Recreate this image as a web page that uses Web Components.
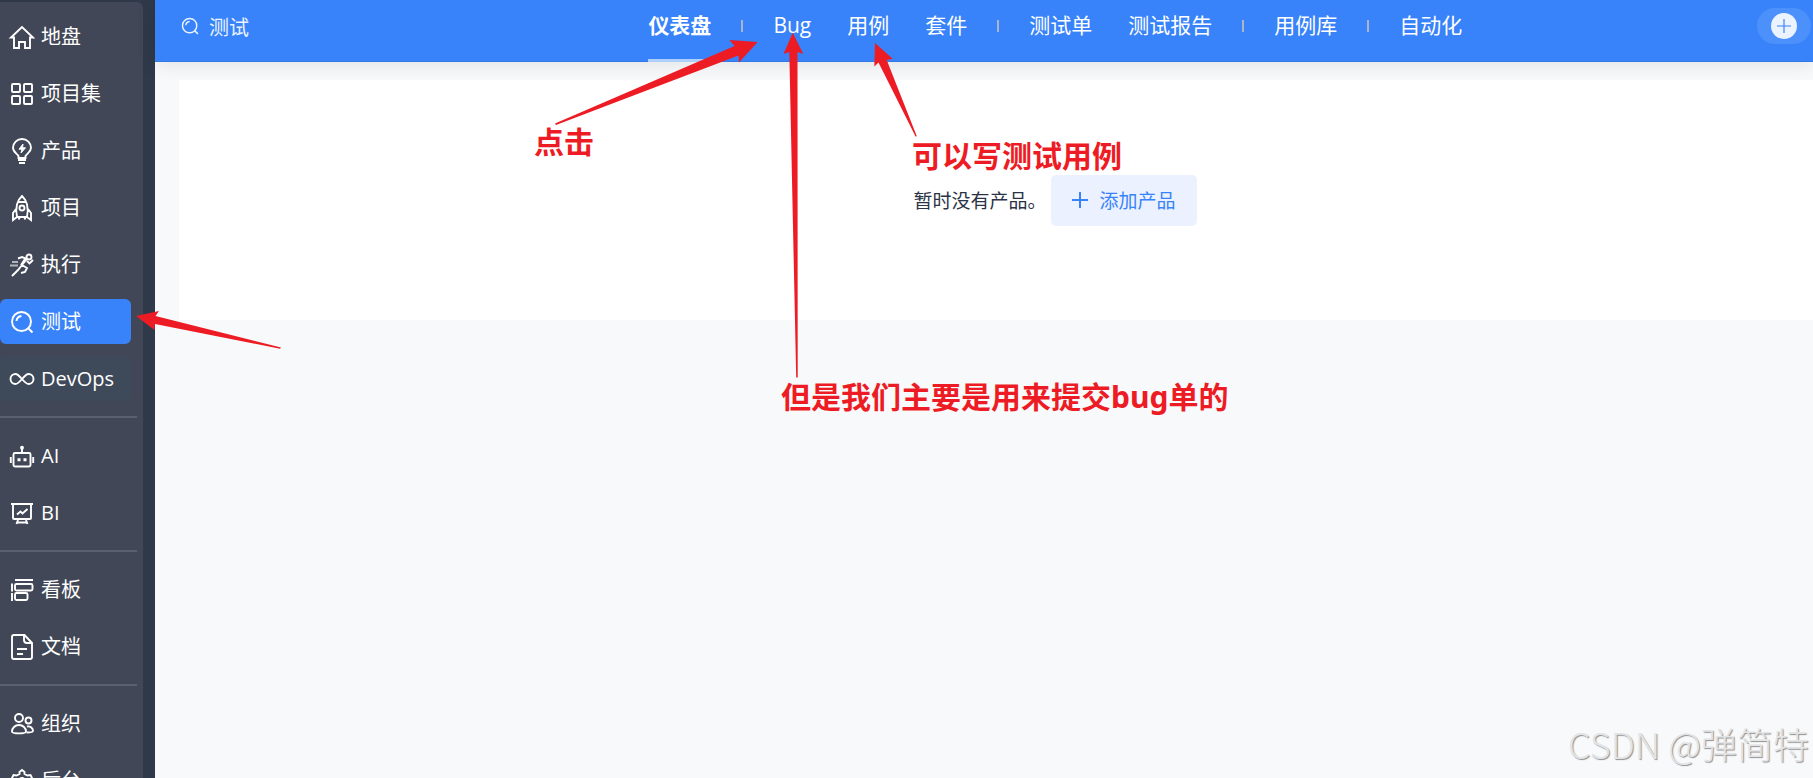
<!DOCTYPE html>
<html lang="zh-CN">
<head>
<meta charset="UTF-8">
<meta name="viewport" content="width=device-width, initial-scale=1">
<title>测试 - 仪表盘</title>
<style>
  body {
    margin: 0;
    background: #f8f9fb;
    font-family: "Open Sans", "Noto Sans CJK SC", sans-serif;
    overflow: hidden;
  }
</style>
</head>
<body>
<app-shell>
  <side-menu slot="menu">
    <side-item icon="home">地盘</side-item>
    <side-item icon="grid">项目集</side-item>
    <side-item icon="bulb">产品</side-item>
    <side-item icon="rocket">项目</side-item>
    <side-item icon="run">执行</side-item>
    <side-item icon="search" class="active">测试</side-item>
    <side-item icon="infinity" class="hover">DevOps</side-item>
    <side-divider></side-divider>
    <side-item icon="robot">AI</side-item>
    <side-item icon="board">BI</side-item>
    <side-divider></side-divider>
    <side-item icon="kanban">看板</side-item>
    <side-item icon="doc">文档</side-item>
    <side-divider></side-divider>
    <side-item icon="people">组织</side-item>
    <side-item icon="gear">后台</side-item>
  </side-menu>
  <top-bar slot="top" heading="测试">
    <nav-link class="active">仪表盘</nav-link>
    <nav-divider></nav-divider>
    <nav-link>Bug</nav-link>
    <nav-link>用例</nav-link>
    <nav-link>套件</nav-link>
    <nav-divider></nav-divider>
    <nav-link>测试单</nav-link>
    <nav-link>测试报告</nav-link>
    <nav-divider></nav-divider>
    <nav-link>用例库</nav-link>
    <nav-divider></nav-divider>
    <nav-link>自动化</nav-link>
  </top-bar>
  <empty-panel action="添加产品">暂时没有产品。</empty-panel>
</app-shell>
<mark-layer>
  <mark-note x="534" y="120">点击</mark-note>
  <mark-note x="912" y="134">可以写测试用例</mark-note>
  <mark-note x="781" y="375">但是我们主要是用来提交bug单的</mark-note>
</mark-layer>
<water-mark>CSDN @弹简特</water-mark>

<script>
const icons = {
  home: `<path d="M1 12.500 12 2l11 10.500h-3V23h-5v-6H9v6H4V12.500z"/>`,
  grid: `<rect x="2" y="2" width="8" height="8" rx="1"/><rect x="14" y="2" width="8" height="8" rx="1"/><rect x="2" y="14" width="8" height="8" rx="1"/><rect x="14" y="14" width="8" height="8" rx="1"/>`,
  bulb: `<path d="M8.500 19v-2C7 14.500 3 13 3 8.800a9 8.800 0 0 1 18 0c0 4.200-4 5.700-5.500 8.200v2zM8 21h8M9 24h6"/><path d="M13 5 9 10.200h3L11 14l4.500-5.200h-3z" fill="currentColor" stroke-width="1"/>`,
  rocket: `<path d="M7 21C5 11 7 4.500 12 0c5 4.500 7 11 5 21zM8 6h8M6 13l-3 4v7l4-3M18 13l3 4v7l-4-3M10 21l-1.500 2.500M14 21l1.500 2.500"/><circle cx="12" cy="12" r="2.500"/>`,
  run: `<circle cx="19" cy="4" r="2.500"/><path d="M8 5.500 12 4l5 2-5 6 5 3-2 4-4 1M12 12l-4 5-6 6M17 8l2.500 2.500L23 7M15 6l-4 6"/><path d="M2 9h6M0 12.500h8" opacity=".6"/>`,
  search: `<circle cx="11.500" cy="11.500" r="9.500"/><path d="m18.500 18.500 4 4M6.500 11a5.500 5.500 0 0 1 5-5"/>`,
  infinity: `<path d="M12 12c-3-3.500-4.500-5-6.500-5a5 5 0 0 0 0 10c2 0 3.500-1.500 6.500-5s4.500-5 6.500-5a5 5 0 0 1 0 10c-2 0-3.500-1.500-6.500-5z"/>`,
  robot: `<rect x="3.500" y="9" width="17" height="13.500" rx="1.500"/><path d="M12 9V4M.800 13v6M23.200 13v6"/><circle cx="12" cy="3.800" r="1" fill="currentColor"/><path d="M7.500 15.800h3M13.500 15.800h3" stroke-width="3"/>`,
  board: `<path d="M1 3h22M3 3v14q0 1 1 1h16q1 0 1-1V3M8 19l-1.500 4M16 19l1.500 4M7 21.500h10M7 13.500l3.500-3 2 2L17.500 8"/>`,
  kanban: `<path d="M5 2h18M2 5.500v8M2 15v8"/><rect x="5" y="6" width="17.500" height="6.500" rx="1.500"/><rect x="5" y="15" width="12.500" height="7" rx="1.500"/>`,
  doc: `<path d="M14.500 0H4Q2 0 2 2v20q0 2 2 2h16q2 0 2-2V8zM14 .500V5q0 3 3 3h5M7 14h10M7 19h6"/>`,
  people: `<circle cx="9" cy="6" r="4"/><path d="M9 13c-4 0-7 3-7 6.500 0 2.500 14 2.500 14 0C16 16 13 13 9 13z"/><circle cx="18.500" cy="8.500" r="3"/><path d="M17 14.500c3.500-.5 6 1.500 6 4.500 0 1.300-3 1.500-6.500 1.500"/>`,
  gear: `<path d="m9.500 3 2.500-2 2.500 2v2l3 1.500L20.500 6 22 9l-1.500 2.500v3L22 17l-2 3.500-3-.5-2.500 2L12 24l-2.500-2L7 20l-3 .500L2 17l1.500-2.500v-3L2 9l1.500-3 3 .500 3-1.500z"/><circle cx="12" cy="12.500" r="3.500"/>`,
  plus: `<path d="M12 0v24M0 12h24"/>`
};

class UiIcon extends HTMLElement {
  connectedCallback() {
    this.attachShadow({ mode: "open" });
    this.shadowRoot.innerHTML = `
    <style>
      :host { display: block; flex: none; width: var(--icon-size, 24px); height: var(--icon-size, 24px); }
      svg { display: block; width: 100%; height: 100%; overflow: visible; }
    </style>
    <svg viewBox="0 0 24 24" fill="none" stroke="currentColor" stroke-width="${this.getAttribute("weight") || 1.9}" aria-hidden="true">${icons[this.getAttribute("name")]}</svg>
    `;
  }
}

class AppShell extends HTMLElement {
  connectedCallback() {
    this.attachShadow({ mode: "open" });
    this.shadowRoot.innerHTML = `
    <style>
      :host { display: flex; height: 100vh; overflow: hidden; }
      .page { flex: 1; min-width: 0; }
      main { padding: 18px 0 0 24px; }
    </style>
    <slot name="menu"></slot>
    <div class="page">
      <slot name="top"></slot>
      <main><slot></slot></main>
    </div>
    `;
  }
}

class SideMenu extends HTMLElement {
  connectedCallback() {
    this.attachShadow({ mode: "open" });
    this.shadowRoot.innerHTML = `
    <style>
      :host {
        display: block;
        box-sizing: border-box;
        flex: none;
        width: 155px;
        padding: 2px 12px 0 0;
        background: #2f394a;
      }
      nav {
        display: flex;
        flex-direction: column;
        gap: 12px;
        box-sizing: border-box;
        min-height: 100%;
        padding: 12px 0;
        border-radius: 0 6px 0 0;
        background: #414756;
      }
    </style>
    <nav><slot></slot></nav>
    `;
  }
}

class SideItem extends HTMLElement {
  connectedCallback() {
    this.attachShadow({ mode: "open" });
    this.shadowRoot.innerHTML = `
    <style>
      :host { display: block; margin-right: 12px; }
      a {
        display: flex;
        align-items: center;
        gap: 7px;
        height: 45px;
        padding-left: 10px;
        border-radius: 6px;
        color: #fff;
        font-size: 20px;
        line-height: 45px;
        text-decoration: none;
        white-space: nowrap;
      }
      :host(.active) a { background: #3883fa; }
      :host(.hover) a { background: #3e495a; }
    </style>
    <a href="#"><ui-icon name="${this.getAttribute("icon")}"></ui-icon><span><slot></slot></span></a>
    `;
  }
}

class SideDivider extends HTMLElement {
  connectedCallback() {
    this.attachShadow({ mode: "open" });
    this.shadowRoot.innerHTML = `
    <style>
      :host { display: block; height: 2px; margin: 3px 6px 3px 0; background: #5a606e; }
    </style>
    `;
  }
}

class TopBar extends HTMLElement {
  connectedCallback() {
    this.attachShadow({ mode: "open" });
    this.shadowRoot.innerHTML = `
    <style>
      :host { display: block; }
      header {
        display: grid;
        grid-template-columns: 10fr auto 7fr;
        height: 62px;
        background: #3883fa;
        box-shadow: inset 0 -1px #3579e6, 0 2px 20px rgba(0, 0, 0, .1);
        color: #fff;
      }
      .heading, .tools {
        display: flex;
        align-items: center;
        height: 52px;
      }
      .heading {
        --icon-size: 18px;
        gap: 10px;
        padding-left: 26px;
        color: #ebf3ff;
        font-size: 20px;
      }
      nav { display: flex; }
      .tools { justify-content: flex-end; padding-right: 2px; }
      button {
        --icon-size: 14px;
        display: grid;
        place-items: center;
        width: 54px;
        height: 36px;
        padding: 0;
        border: 0;
        border-radius: 18px;
        background: #4c90fb;
        color: #3883fa;
      }
      .dot {
        display: grid;
        place-items: center;
        width: 26px;
        height: 26px;
        border-radius: 50%;
        background: #ebf3ff;
      }
    </style>
    <header>
      <div class="heading"><ui-icon name="search"></ui-icon><span>${this.getAttribute("heading")}</span></div>
      <nav><slot></slot></nav>
      <div class="tools">
        <button type="button" aria-label="+"><span class="dot"><ui-icon name="plus" weight="2"></ui-icon></span></button>
      </div>
    </header>
    `;
  }
}

class NavLink extends HTMLElement {
  connectedCallback() {
    this.attachShadow({ mode: "open" });
    this.shadowRoot.innerHTML = `
    <style>
      :host { display: block; padding: 0 18px; }
      a {
        display: block;
        box-sizing: border-box;
        height: 62px;
        border-bottom: 3px solid transparent;
        color: #fff;
        font-size: 21px;
        line-height: 50px;
        text-decoration: none;
        white-space: nowrap;
      }
      :host(.active) a { border-color: #afcffd; font-weight: bold; }
    </style>
    <a href="#"><slot></slot></a>
    `;
  }
}

class NavDivider extends HTMLElement {
  connectedCallback() {
    this.attachShadow({ mode: "open" });
    this.shadowRoot.innerHTML = `
    <style>
      :host { display: block; width: 2px; height: 12px; margin: 20px 12px 0; background: #a9b5cb; }
    </style>
    `;
  }
}

class EmptyPanel extends HTMLElement {
  connectedCallback() {
    this.attachShadow({ mode: "open" });
    this.shadowRoot.innerHTML = `
    <style>
      :host {
        display: flex;
        align-items: center;
        justify-content: center;
        gap: 4px;
        box-sizing: border-box;
        min-height: 240px;
        padding-left: 118px;
        background: #fff;
        color: #2b3347;
        font-size: 19px;
      }
      button {
        --icon-size: 16px;
        display: flex;
        align-items: center;
        gap: 12px;
        height: 51px;
        padding: 0 21px;
        border: 0;
        border-radius: 5px;
        background: #ebf1fe;
        color: #3883fa;
        font: inherit;
      }
    </style>
    <span><slot></slot></span>
    <button type="button"><ui-icon name="plus" weight="3"></ui-icon>${this.getAttribute("action")}</button>
    `;
  }
}

// Red arrows and notes drawn over the page
class MarkLayer extends HTMLElement {
  connectedCallback() {
    this.attachShadow({ mode: "open" });
    this.shadowRoot.innerHTML = `
    <style>
      :host { position: absolute; inset: 0; overflow: hidden; color: #ed1c24; pointer-events: none; }
      svg { position: absolute; top: 0; left: 0; width: 100%; height: 100%; }
    </style>
    <svg fill="currentColor" aria-hidden="true">
      <polygon points="136,316 159,311 155.500,316 281,347.500 280,348.700 155,324 154.500,330"/>
      <polygon points="757.700,42 729.500,40 734.500,46 555,123.500 556,125 738.500,55.500 739,62.500"/>
      <polygon points="792.700,32.700 783.500,54 789.300,52 796.200,377.500 797.700,377.500 797.500,52 803.300,54"/>
      <polygon points="875,43 874.300,66.500 878.500,62.500 915.700,136.700 916.700,136 886.700,60 892.700,58.700"/>
    </svg>
    <slot></slot>
    `;
  }
}

class MarkNote extends HTMLElement {
  connectedCallback() {
    this.style.left = `${this.getAttribute("x")}px`;
    this.style.top = `${this.getAttribute("y")}px`;
    this.attachShadow({ mode: "open" });
    this.shadowRoot.innerHTML = `
    <style>
      :host {
        position: absolute;
        font-family: "Noto Sans", "Noto Sans CJK SC", sans-serif;
        font-size: 30px;
        font-weight: bold;
        line-height: 44px;
        white-space: nowrap;
      }
    </style>
    <slot></slot>
    `;
  }
}

class WaterMark extends HTMLElement {
  connectedCallback() {
    this.attachShadow({ mode: "open" });
    this.shadowRoot.innerHTML = `
    <style>
      :host {
        position: absolute;
        right: 4px;
        bottom: 13px;
        color: #e3e4e6;
        font-family: "Noto Sans CJK SC", sans-serif;
        font-size: 36px;
        font-weight: 300;
        line-height: 44px;
        text-shadow: 1px 1px 1px #8f8f8f;
      }
    </style>
    <slot></slot>
    `;
  }
}

customElements.define("ui-icon", UiIcon);
customElements.define("app-shell", AppShell);
customElements.define("side-menu", SideMenu);
customElements.define("side-item", SideItem);
customElements.define("side-divider", SideDivider);
customElements.define("top-bar", TopBar);
customElements.define("nav-link", NavLink);
customElements.define("nav-divider", NavDivider);
customElements.define("empty-panel", EmptyPanel);
customElements.define("mark-layer", MarkLayer);
customElements.define("mark-note", MarkNote);
customElements.define("water-mark", WaterMark);
</script>
</body>
</html>
